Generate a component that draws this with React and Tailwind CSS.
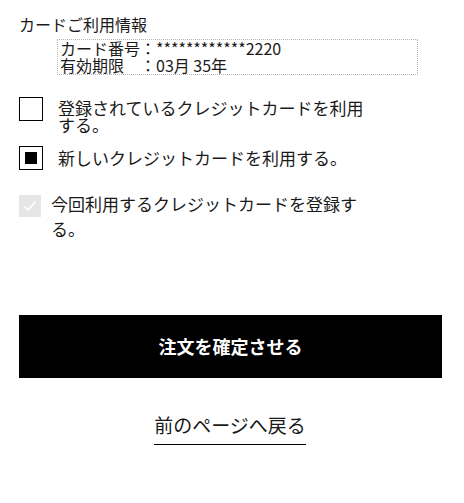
export default function App() {
  const font = { fontFamily: '"Noto Sans CJK JP", "Noto Sans", sans-serif' };
  return (
    <div className="w-[464px] h-[503px] bg-white text-[#1a1a1a]" style={font}>
      <div className="pl-[19px] pr-[22px] pt-[14px]">
        <div className="text-[16px] leading-[20px]">カードご利用情報</div>
        <div className="ml-[38px] mt-[5px] w-[361px] border border-dotted border-[#b5b5b5] pl-[2px] text-[16px] leading-[17px]">
          <div>カード番号：************2220</div>
          <div>有効期限　：03月 35年</div>
        </div>

        <div className="mt-[22px] flex items-start">
          <div className="h-[24px] w-[24px] shrink-0 border border-black bg-white" />
          <div className="ml-[15px] mt-[2px] w-[322px] text-[17px] leading-[17px]">
            登録されているクレジットカードを利用する。
          </div>
        </div>

        <div className="mt-[13px] flex items-center">
          <div className="flex h-[24px] w-[24px] shrink-0 items-center justify-center border border-black bg-white">
            <div className="h-[12px] w-[12px] bg-black" />
          </div>
          <div className="ml-[15px] text-[17px] leading-[24px]">新しいクレジットカードを利用する。</div>
        </div>

        <div className="mt-[21px] flex items-start">
          <div className="mt-[4px] flex h-[22px] w-[22px] shrink-0 items-center justify-center bg-[#e6e6e6]">
            <svg width="16" height="16" viewBox="0 0 16 16" fill="none">
              <path d="M2.5 8.5 L6.2 12 L13.5 3.5" stroke="#ffffff" strokeWidth="1.6" />
            </svg>
          </div>
          <div className="ml-[10px] w-[328px] text-[17px] leading-[25px]">
            今回利用するクレジットカードを登録する。
          </div>
        </div>

        <button className="mt-[74px] flex h-[63px] w-[423px] items-center justify-center bg-black text-[18px] font-bold text-white">
          注文を確定させる
        </button>

        <div className="mt-[35px] flex justify-center pr-[1px]">
          <a className="inline-block border-b border-black pb-[7px] text-[19px] leading-[24px] text-[#1a1a1a]">
            前のページへ戻る
          </a>
        </div>
      </div>
    </div>
  );
}
